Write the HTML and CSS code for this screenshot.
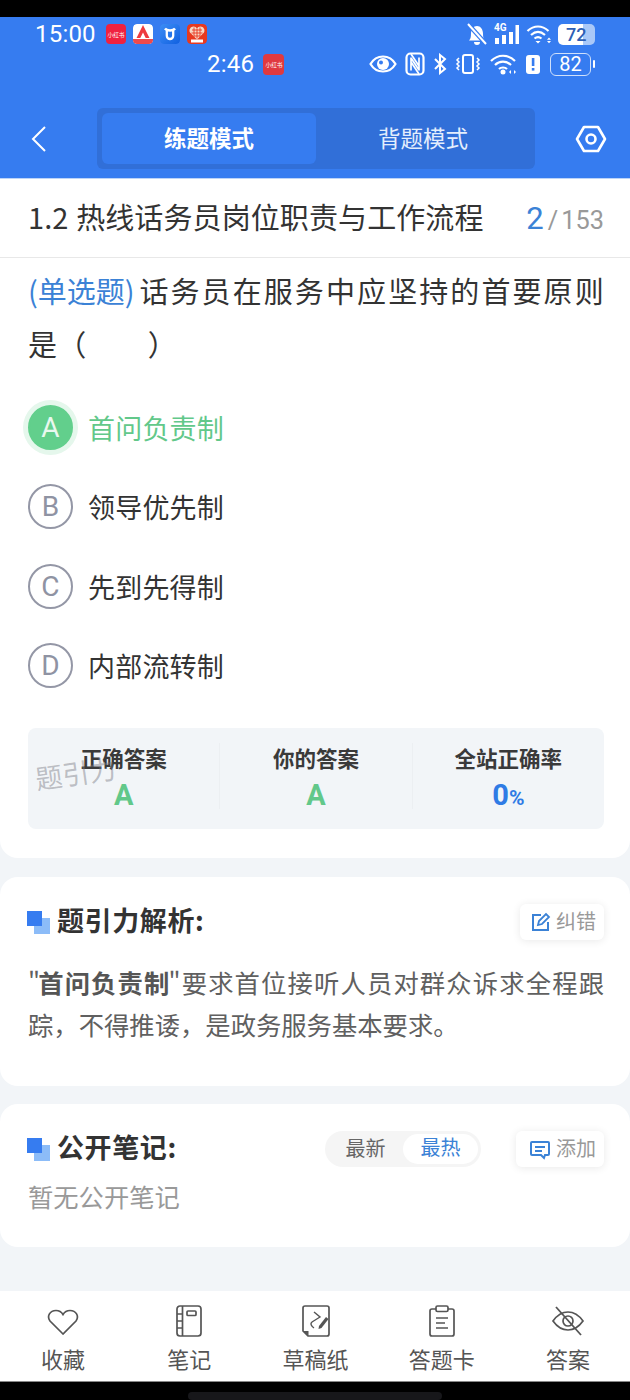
FILE: index.html
```html
<!DOCTYPE html>
<html lang="zh-CN">
<head>
    <meta charset="UTF-8">
    <meta name="viewport" content="width=device-width, initial-scale=1.0">
    <title>题引力</title>
    <link rel="stylesheet" href="styles.css">
</head>
<body>
<div class="phone">
    <div class="black-top"></div>
    <header class="header">
        <div class="status-row row-one">
            <div class="status-left">
                <span class="clock">15:00</span>
                <span class="app-icon red"><span class="tiny">小红书</span></span>
                <span class="app-icon"><svg viewBox="0 0 20 20"><rect width="20" height="20" rx="4" fill="#fff"/><path d="M3.500 14 10 1l6.500 13h-3.800L10 8.500 7.300 14z" fill="#ee3b3f"/><path d="M0 15h20v1l0 0v0.500a3.500 3.500 0 0 1-3.500 3.500h-13A3.500 3.500 0 0 1 0 16.500z" fill="#ee4a4d"/></svg></span>
                <span class="app-icon"><svg viewBox="0 0 20 20"><defs><linearGradient id="bluegrad" x1="0" y1="0" x2="1" y2="1"><stop offset="0" stop-color="#3d8df5"/><stop offset="1" stop-color="#1060e0"/></linearGradient></defs><rect width="20" height="20" rx="4" fill="url(#bluegrad)"/><path d="M5 4.500c1 1.500 2.500 2 5 2s4-.5 5-2M6.800 7v4.800a3.200 3.200 0 0 0 6.400 0V7" fill="none" stroke="#fff" stroke-width="2.300"/></svg></span>
                <span class="app-icon"><svg viewBox="0 0 20 20"><rect width="20" height="20" rx="4" fill="#e8391f"/><path d="M10 15.500 3 8.500C1.500 5.500 3.800 2.500 6.500 2.500c1.500 0 2.800.8 3.500 2 .7-1.200 2-2 3.500-2 2.700 0 5 3 3.500 6z" fill="#f7d9c6"/><path d="M5 6h10M4.500 9h11M7 12h6M7 3.500v9M10 4.500v10M13 3.500v9" stroke="#e8391f" stroke-width=".9"/><rect x="4" y="15.500" width="12" height="3" fill="#fff"/></svg></span>
            </div>
            <div class="status-right">
                <svg class="bell" width="24" height="24" viewBox="0 0 24 24"><path d="M4 18.500c1.500-1.500 2-3 2-7 0-4 2.500-7.500 6-7.500s6 3.500 6 7.500c0 4 .5 5.500 2 7zM9 20h6a3 3 0 0 1-6 0z" fill="#fff"/><path d="M3 2l18 20" stroke="#367cf0" stroke-width="4.500"/><path d="M3 2l18 20" stroke="#fff" stroke-width="2"/></svg>
                <svg width="26" height="24" viewBox="0 0 26 24"><text x="0" y="8.500" class="four-g">4G</text><path d="M1 16h4v6H1zM8 13h4v9H8zM15 10h4v12h-4zM21.500 3H25v19h-3.500z" fill="#fff"/></svg>
                <svg width="26" height="22" viewBox="0 0 26 22"><path d="M1.500 8c6.500-6 14.500-6 21 0M5 12c4.500-4 9.500-4 14 0M8.500 15.500c2.500-2 4.500-2 7 0" fill="none" stroke="#fff" stroke-width="2.200"/><path d="M9.500 18h5L12 20.500zM21 16.800h4l-2-2.300zM21 18h4l-2 2.300z" fill="#fff"/></svg>
                <span class="batt-solid"><span class="batt-num">72</span></span>
            </div>
        </div>
        <div class="status-row row-two">
            <div class="status-left second">
                <span class="clock">2:46</span>
                <span class="app-icon dull"><span class="tiny">小红书</span></span>
            </div>
            <div class="status-right second-right">
                <svg width="28" height="20" viewBox="0 0 28 20"><path d="M1.500 10C5 4 9 2.500 14 2.500S23 4 26.500 10C23 16 19 17.500 14 17.500S5 16 1.500 10z" fill="none" stroke="#fff" stroke-width="2.200"/><circle cx="14" cy="10" r="6" fill="#fff"/><circle cx="12" cy="8.500" r="2" fill="#367cf0"/></svg>
                <svg width="20" height="24" viewBox="0 0 20 24"><rect x="1.500" y="1.500" width="17" height="21" rx="4" fill="none" stroke="#fff" stroke-width="2.200"/><path d="M6 5.500v13M14 5.500v13M6 6l8 12M6 10l8 12M6 2l8 12" fill="none" stroke="#fff" stroke-width="1.700"/></svg>
                <svg width="14" height="22" viewBox="0 0 14 22"><path d="M2 6l10 10-5 4V2l5 4L2 16" fill="none" stroke="#fff" stroke-width="2"/></svg>
                <svg width="26" height="22" viewBox="0 0 26 22"><rect x="8" y="2" width="10" height="18" rx="2" fill="none" stroke="#fff" stroke-width="2"/><path d="M4 5l-2 2 2 2-2 2 2 2-2 2 2 2M22 5l2 2-2 2 2 2-2 2 2 2-2 2" fill="none" stroke="#fff" stroke-width="1.500"/></svg>
                <svg width="28" height="22" viewBox="0 0 28 22"><path d="M2 8c7-7 17-7 24 0M6 12c4.500-4.500 11.500-4.500 16 0M10 16c2-2 6-2 8 0" fill="none" stroke="#fff" stroke-width="2.200"/><circle cx="14" cy="19" r="2.500" fill="#fff"/><path d="M20 19l2-2v4zM27 19l-2-2v4z" fill="#fff"/></svg>
                <svg width="16" height="22" viewBox="0 0 16 22"><path d="M4 2h8a3 3 0 0 1 3 3v13a3 3 0 0 1-3 3H4a3 3 0 0 1-3-3V5a3 3 0 0 1 3-3z" fill="#fff"/><rect x="6.800" y="5" width="2.600" height="8" fill="#367cf0"/><rect x="6.800" y="15" width="2.600" height="2.600" fill="#367cf0"/></svg>
                <span class="batt-line"><span class="batt-text">82</span></span><span class="batt-cap"></span>
            </div>
        </div>
        <nav class="nav">
            <svg class="back" width="18" height="28" viewBox="0 0 18 28"><path d="M15 2 3 14l12 12" fill="none" stroke="#fff" stroke-width="2"/></svg>
            <div class="mode-switch">
                <div class="mode active">练题模式</div>
                <div class="mode">背题模式</div>
            </div>
            <svg class="settings" width="32" height="28" viewBox="0 0 32 28"><path d="M9 2h14l7 12-7 12H9L2 14z" fill="none" stroke="#fff" stroke-width="2.600" stroke-linejoin="round"/><circle cx="16" cy="14" r="4.500" fill="none" stroke="#fff" stroke-width="2.600"/></svg>
        </nav>
    </header>

    <div class="title-bar">
        <h1 class="chapter">1.2 热线话务员岗位职责与工作流程</h1>
        <div class="progress"><span class="current">2</span><span class="total">/ 153</span></div>
    </div>

    <section class="card question-card">
        <p class="question"><span class="q-type">(单选题)</span>话务员在服务中应坚持的首要原则是（&nbsp;&nbsp;&nbsp;&nbsp;&nbsp;&nbsp;&nbsp;&nbsp;&nbsp;）</p>
        <ul class="options">
            <li class="option correct"><span class="letter">A</span>首问负责制</li>
            <li class="option"><span class="letter">B</span>领导优先制</li>
            <li class="option"><span class="letter">C</span>先到先得制</li>
            <li class="option"><span class="letter">D</span>内部流转制</li>
        </ul>
        <div class="result">
            <div class="result-col"><div class="result-label">正确答案</div><div class="result-val green">A</div></div>
            <div class="result-col"><div class="result-label">你的答案</div><div class="result-val green">A</div></div>
            <div class="result-col"><div class="result-label">全站正确率</div><div class="result-val blue">0<small>%</small></div></div>
            <div class="watermark">题引力</div>
        </div>
    </section>

    <section class="card analysis-card">
        <div class="card-head">
            <h2 class="card-title"><span class="squares"></span><span class="title-text">题引力解析:</span></h2>
            <div class="mini-btn">
                <svg width="21" height="21" viewBox="0 0 21 21"><path d="M11 3H3v15h15v-8" fill="none" stroke="#3b82d6" stroke-width="2"/><path d="M8 13l1-4 7-7 3 3-7 7z" fill="none" stroke="#3b82d6" stroke-width="1.800"/></svg>
                <span>纠错</span>
            </div>
        </div>
        <p class="analysis">"<b>首问负责制</b>"要求首位接听人员对群众诉求全程跟踪，不得推诿，是政务服务基本要求。</p>
    </section>

    <section class="card notes-card">
        <div class="card-head">
            <h2 class="card-title"><span class="squares"></span><span class="title-text">公开笔记:</span></h2>
            <div class="sort-tabs"><span class="sort">最新</span><span class="sort on">最热</span></div>
            <div class="mini-btn add-btn">
                <svg width="22" height="21" viewBox="0 0 22 21"><path d="M3 3h16a1 1 0 0 1 1 1v11a1 1 0 0 1-1 1h-3l-1 3-3-3H3a1 1 0 0 1-1-1V4a1 1 0 0 1 1-1z" fill="none" stroke="#3b82d6" stroke-width="2"/><path d="M6 8h10M6 12h7" stroke="#3b82d6" stroke-width="2"/></svg>
                <span>添加</span>
            </div>
        </div>
        <p class="no-notes">暂无公开笔记</p>
    </section>

    <div class="spacer"></div>

    <footer class="tabbar">
        <div class="tab">
            <svg width="32" height="32" viewBox="0 0 32 32"><path d="M16 29 3 16C-.5 11 3 5.500 9 5.500c3 0 5.500 1.500 7 4 1.500-2.500 4-4 7-4C29 5.500 32.500 11 29 16z" fill="none" stroke="#555" stroke-width="1.700"/></svg>
            <span>收藏</span>
        </div>
        <div class="tab">
            <svg width="32" height="32" viewBox="0 0 32 32"><rect x="4" y="1" width="24" height="30" rx="3" fill="none" stroke="#555" stroke-width="1.700"/><path d="M9.500 1v30M4 9h5.500M4 16h5.500M4 23h5.500" fill="none" stroke="#555" stroke-width="1.700"/><rect x="14" y="6" width="9" height="4.500" rx="1" fill="none" stroke="#555" stroke-width="1.700"/></svg>
            <span>笔记</span>
        </div>
        <div class="tab">
            <svg width="32" height="32" viewBox="0 0 32 32"><path d="M8 31H27a2 2 0 0 0 2-2V3a2 2 0 0 0-2-2H5a2 2 0 0 0-2 2v23z" fill="none" stroke="#555" stroke-width="1.700"/><path d="M3 26h5.500v5z" fill="#555"/><path d="M14 7l6 5-8 5c-2 1.500-1 4 2 6" fill="none" stroke="#555" stroke-width="1.400"/><path d="M19 21l7-9 2.500 2-7 9-3 1z" fill="#555"/></svg>
            <span>草稿纸</span>
        </div>
        <div class="tab">
            <svg width="32" height="32" viewBox="0 0 32 32"><path d="M10 4H6a2 2 0 0 0-2 2v23a2 2 0 0 0 2 2h20a2 2 0 0 0 2-2V6a2 2 0 0 0-2-2h-4" fill="none" stroke="#555" stroke-width="1.700"/><rect x="10" y="1" width="12" height="5.500" rx="1.500" fill="none" stroke="#555" stroke-width="1.700"/><path d="M10 13h12M10 18h9M10 23h12" stroke="#555" stroke-width="1.700"/></svg>
            <span>答题卡</span>
        </div>
        <div class="tab">
            <svg width="34" height="32" viewBox="0 0 34 32"><path d="M2 16C7 9 12 7 17 7s10 2 15 9C27 23 22 25 17 25S7 23 2 16z" fill="none" stroke="#555" stroke-width="1.700"/><circle cx="17" cy="16" r="5" fill="none" stroke="#555" stroke-width="1.700"/><path d="M5 2l25 28" stroke="#555" stroke-width="1.800"/></svg>
            <span>答案</span>
        </div>
    </footer>
    <div class="black-bottom"><div class="home-bar"></div></div>
</div>
</body>
</html>
```

FILE: styles.css
```css
* {
    box-sizing: border-box;
}

body {
    margin: 0;
    background-color: #f2f5f8;
    font-family: "Noto Sans CJK SC", "Noto Sans", sans-serif;
    color: #333;
}

.phone {
    width: 630px;
    height: 1400px;
    display: flex;
    flex-direction: column;
    overflow: hidden;
}

.black-top {
    height: 17px;
    background-color: #000;
}

/* header */
.header {
    height: 162px;
    padding: 4px 0 0;
    background-color: #367cf0;
    border-bottom: 1px solid #bcd4f8;
    color: #fff;
}

.status-row {
    display: flex;
    justify-content: space-between;
}

.row-one {
    height: 26px;
    padding: 0 35px;
}

.row-two {
    height: 32px;
    padding: 2px 35px 0 207px;
    align-items: center;
}

.status-left {
    display: flex;
    align-items: center;
    gap: 7px;
}

.status-right {
    display: flex;
    align-items: center;
    gap: 6px;
}

.second {
    gap: 6px;
}

.second-right {
    gap: 8px;
}

.clock {
    font-family: "Roboto", sans-serif;
    font-size: 24px;
    line-height: 26px;
    margin-right: 3px;
    letter-spacing: 0.2px;
}

.app-icon {
    width: 20px;
    height: 20px;
    border-radius: 4px;
    display: flex;
    align-items: center;
    justify-content: center;
    overflow: hidden;
}

.app-icon svg {
    width: 20px;
    height: 20px;
    display: block;
}

.red {
    background-color: #f0213f;
}

.dull {
    background-color: #e0393f;
    width: 21px;
    height: 21px;
}

.tiny {
    font-size: 6px;
    white-space: nowrap;
    color: #fff;
    transform: scale(0.95);
}

.bell {
    margin-right: -1px;
}

.four-g {
    font-family: "Roboto", sans-serif;
    font-size: 10px;
    font-weight: 700;
    fill: #fff;
}

.batt-solid {
    width: 37px;
    height: 21px;
    display: flex;
    align-items: center;
    padding-left: 8px;
    border-radius: 5px;
    background: linear-gradient(90deg, #fff 0, #fff 68%, #a9c8f8 68%, #a9c8f8 100%);
}

.batt-num {
    font-family: "Roboto", sans-serif;
    font-size: 18px;
    font-weight: 500;
    line-height: 21px;
    color: #2f5fb5;
}

.batt-line {
    width: 41px;
    height: 23px;
    border: 1.5px solid #cfe0fb;
    border-radius: 6px;
    margin-left: 1px;
    text-align: center;
}

.batt-text {
    font-family: "Roboto", sans-serif;
    font-size: 20px;
    line-height: 20px;
    display: block;
}

.batt-cap {
    width: 2px;
    height: 8px;
    margin-left: -6px;
    background-color: #fff;
    border-radius: 1px;
}

.nav {
    display: flex;
    align-items: center;
    justify-content: space-between;
    margin-top: 29px;
    padding: 0 23px 0 30px;
    height: 61px;
}

.mode-switch {
    width: 439px;
    height: 61px;
    margin-left: 49px;
    margin-right: 40px;
    padding: 5px;
    display: flex;
    background-color: #316fd8;
    border-radius: 6px;
}

.mode {
    flex: 1;
    display: flex;
    align-items: center;
    justify-content: center;
    padding-bottom: 4px;
    font-size: 22.500px;
    color: #e4eefd;
    border-radius: 6px;
}

.mode.active {
    background-color: #367cf0;
    color: #fff;
    font-weight: 700;
}

.back, .settings {
    flex: none;
}

/* title */
.title-bar {
    height: 79px;
    display: flex;
    align-items: center;
    justify-content: space-between;
    padding: 0 26px 0 28px;
    background-color: #fff;
    border-bottom: 1px solid #e8e8e8;
}

.chapter {
    margin: 0 0 4px;
    font-size: 29px;
    font-weight: 400;
    letter-spacing: 0.1px;
    word-spacing: 1px;
    color: #333;
}

.progress {
    display: flex;
    align-items: baseline;
    gap: 4px;
    margin-left: auto;
    font-family: "Roboto", sans-serif;
}

.current {
    font-size: 31px;
    color: #3b82d6;
}

.total {
    font-size: 25.300px;
    word-spacing: -3px;
    color: #999;
}

/* cards */
.card {
    background-color: #fff;
    padding: 0 26px 0 28px;
}

.question-card {
    height: 600px;
    padding-top: 6px;
    border-radius: 0 0 18px 18px;
}

.question {
    margin: 0;
    font-size: 29px;
    line-height: 53px;
    letter-spacing: 0.3px;
    text-align: justify;
    color: #333;
}

.q-type {
    display: inline-block;
    margin-right: 3px;
    letter-spacing: 0;
    color: #3b82d6;
}

.options {
    list-style: none;
    margin: 34px 0 0;
    padding: 0;
}

.option {
    height: 46px;
    margin-bottom: 33.500px;
    display: flex;
    align-items: center;
    gap: 15px;
    font-size: 27px;
    color: #333;
    letter-spacing: 0.2px;
}

.letter {
    width: 45px;
    height: 45px;
    border: 2px solid #9497a6;
    border-radius: 50%;
    display: flex;
    align-items: center;
    justify-content: center;
    font-family: "Roboto", sans-serif;
    font-size: 28px;
    color: #8f93a3;
}

.correct {
    color: #62c88a;
}

.correct .letter {
    background-color: #62cf8c;
    border-color: #62cf8c;
    color: #e9f8ef;
    box-shadow: 0 0 0 5px #e5f7ec;
}

.result {
    position: relative;
    height: 101px;
    margin-top: 39.500px; /* collapses with the last option's margin */
    padding-top: 15px;
    display: flex;
    background-color: #f2f5f8;
    border-radius: 8px;
}

.result-col {
    flex: 1;
    text-align: center;
    height: 66px;
}

.result-col + .result-col {
    border-left: 1px solid #eceff2;
}

.result-label {
    margin-bottom: 4px;
    font-size: 21.500px;
    font-weight: 700;
    line-height: 30px;
    color: #3a3a3a;
}

.result-val {
    font-family: "Roboto", sans-serif;
    font-size: 29px;
    font-weight: 700;
    line-height: 36px;
}

.result-val small {
    font-size: 21px;
}

.green {
    color: #62c88a;
}

.blue {
    color: #2f7be5;
}

.watermark {
    position: absolute;
    left: 7px;
    top: 30px;
    font-size: 27px;
    line-height: 30px;
    color: rgba(120, 120, 130, 0.45);
    transform: rotate(-8deg);
}

.analysis-card {
    height: 209px;
    margin-top: 19px;
    padding-top: 27px;
    border-radius: 18px;
}

.notes-card {
    height: 143px;
    margin-top: 18px;
    padding-top: 27px;
    border-radius: 18px;
}

.card-head {
    display: flex;
    align-items: center;
    height: 36px;
}

.card-title {
    margin: 0 auto 0 -1px;
    display: flex;
    align-items: center;
    gap: 7px;
    font-size: 27px;
    font-weight: 700;
    color: #333;
    letter-spacing: 0.6px;
}

.title-text {
    margin-bottom: 6px;
}

.squares {
    position: relative;
    width: 23px;
    height: 23px;
    background: linear-gradient(#8cbcf8, #8cbcf8) 7px 7px / 16px 16px no-repeat;
}

.squares::before {
    content: "";
    position: absolute;
    left: 0;
    top: 0;
    width: 15px;
    height: 15px;
    background-color: #367cf0;
}

.mini-btn {
    height: 36px;
    padding: 0 8px 0 10px;
    display: flex;
    align-items: center;
    gap: 5px;
    font-size: 20px;
    color: #999;
    background-color: #fff;
    border-radius: 6px;
    box-shadow: 0 1px 8px rgba(0, 0, 0, 0.09);
}

.mini-btn span {
    margin-bottom: 3px;
}

.add-btn {
    padding-left: 13px;
}

.sort-tabs {
    display: flex;
    align-items: center;
    height: 36px;
    width: 156px;
    padding: 3px;
    margin-right: 35px;
    background-color: #f5f5f5;
    border-radius: 18px;
}

.sort {
    flex: 1;
    margin-bottom: 3px;
    font-size: 20px;
    text-align: center;
    color: #666;
}

.sort.on {
    height: 30px;
    margin-bottom: 0;
    line-height: 26px;
    background-color: #fff;
    color: #3b82d6;
    border-radius: 15px;
}

.analysis {
    margin: 21px 0 0;
    font-size: 25.330px;
    line-height: 42px;
    text-align: justify;
    color: #606060;
}

.analysis b {
    margin: 0 -2px 0 -3px;
    color: #555;
}

.no-notes {
    margin: 11px 0 0;
    font-size: 25.300px;
    line-height: 36px;
    color: #999;
}

.spacer {
    flex: 1;
}

/* bottom */
.tabbar {
    height: 91px;
    display: flex;
    justify-content: space-between;
    padding: 14px 0 0 1px;
    background-color: #fff;
    border-bottom: 1px solid #888;
}

.tab {
    width: 124px;
    display: flex;
    flex-direction: column;
    align-items: center;
    gap: 5px;
    font-size: 22px;
    line-height: 32px;
    color: #555;
}

.black-bottom {
    height: 18px;
    background-color: #000;
    padding-top: 10px;
}

.home-bar {
    width: 254px;
    height: 8px;
    margin: 0 auto;
    background-color: #17171a;
    border-radius: 4px;
}
```
